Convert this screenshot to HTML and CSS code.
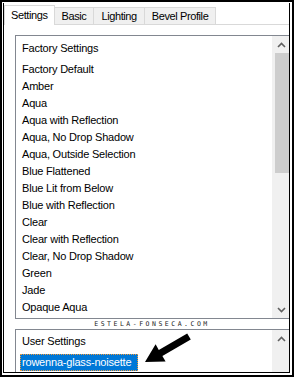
FILE: index.html
```html
<!DOCTYPE html>
<html>
<head>
<meta charset="utf-8">
<link rel="stylesheet" href="styles.css">
</head>
<body>
<div class="frame">
  <div class="dialog">
    <div class="tabs">
      <div class="tab active">Settings</div>
      <div class="tab">Basic</div>
      <div class="tab">Lighting</div>
      <div class="tab">Bevel Profile</div>
    </div>
    <div class="panel">
      <div class="listbox lb1">
        <div class="list">
          <div class="head">Factory Settings</div>
          <div class="item">Factory Default</div>
          <div class="item">Amber</div>
          <div class="item">Aqua</div>
          <div class="item">Aqua with Reflection</div>
          <div class="item">Aqua, No Drop Shadow</div>
          <div class="item">Aqua, Outside Selection</div>
          <div class="item">Blue Flattened</div>
          <div class="item">Blue Lit from Below</div>
          <div class="item">Blue with Reflection</div>
          <div class="item">Clear</div>
          <div class="item">Clear with Reflection</div>
          <div class="item">Clear, No Drop Shadow</div>
          <div class="item">Green</div>
          <div class="item">Jade</div>
          <div class="item">Opaque Aqua</div>
        </div>
        <div class="scrollbar">
          <div class="sbtn"><svg width="9" height="6" viewBox="0 0 9 6"><polyline points="1,5 4.5,1.5 8,5" fill="none" stroke="#606060" stroke-width="1.6"/></svg></div>
          <div class="track"><div class="thumb"></div></div>
          <div class="sbtn"><svg width="9" height="6" viewBox="0 0 9 6"><polyline points="1,1 4.5,4.5 8,1" fill="none" stroke="#606060" stroke-width="1.6"/></svg></div>
        </div>
      </div>
      <div class="watermark">ESTELA-FONSECA.COM</div>
      <div class="listbox lb2">
        <div class="list">
          <div class="head">User Settings</div>
          <div class="item"><span class="selected">rowenna-glass-noisette</span></div>
        </div>
        <div class="scrollbar">
          <div class="sbtn"><svg width="9" height="6" viewBox="0 0 9 6"><polyline points="1,5 4.5,1.5 8,5" fill="none" stroke="#606060" stroke-width="1.6"/></svg></div>
          <div class="track"></div>
        </div>
      </div>
    </div>
  </div>
  <svg class="pointer" width="294" height="377" viewBox="0 0 294 377">
    <polygon points="145,362 165.6,361.5 162.4,355.9 190.8,339.5 187.2,333.5 158.8,349.9 155.6,344.3" fill="#000"/>
  </svg>
</div>
</body>
</html>
```

FILE: styles.css
```css
* { box-sizing: border-box; }
html, body { margin: 0; padding: 0; background: #fff; }
body {
  font-family: "Liberation Sans", Arial, sans-serif;
  font-size: 11px;
  letter-spacing: -0.2px;
  color: #000;
}
.frame {
  position: relative;
  width: 294px;
  height: 377px;
  border: 2px solid #000;
  padding: 1px 2px 2px 1px;
  background: #fff;
  overflow: hidden;
}
.dialog {
  height: 100%;
  border: 1px solid #000;
  border-top: none;
  display: flex;
  flex-direction: column;
}
.tabs {
  display: flex;
  align-items: flex-end;
  height: 22px;
  padding-top: 2px;
  border-bottom: 1px solid #d9d9d9;
}
.tab {
  height: 17px;
  display: flex;
  align-items: center;
  padding: 0 7px;
  background: #f0f0f0;
  border: 1px solid #d9d9d9;
  border-left: none;
  border-bottom: none;
  white-space: nowrap;
  letter-spacing: -0.4px;
}
.tab.active {
  height: 20px;
  margin-bottom: -1px;
  padding: 0 6px 2px 6px;
  background: #fff;
  border-left: 1px solid #d9d9d9;
}
.panel {
  flex: 1;
  display: flex;
  flex-direction: column;
  min-height: 0;
}
.listbox {
  margin-left: 11px;
  border: 1px solid #828790;
  border-right: none;
  display: flex;
}
.lb1 {
  margin-top: 10px;
  height: 284px;
}
.lb2 {
  flex: 1;
  border-bottom: none;
  min-height: 0;
}
.list {
  flex: 1;
  padding: 4px 0 0 4px;
  overflow: hidden;
}
.lb2 .list { padding-top: 3px; }
.head, .item {
  height: 17px;
  line-height: 17px;
  padding-left: 2px;
  white-space: nowrap;
}
.head { margin-bottom: 4px; }
.lb2 .item { padding-left: 0; }
.selected {
  display: inline-block;
  height: 17px;
  line-height: 15px;
  padding: 0 6px 0 1px;
  background: #0078d7;
  color: #fff;
  border: 1px dotted #f39a3a;
}
.scrollbar {
  width: 17px;
  display: flex;
  flex-direction: column;
  background: #f0f0f0;
}
.sbtn {
  height: 17px;
  display: flex;
  align-items: center;
  justify-content: center;
  padding-left: 2px;
}
.track {
  flex: 1;
  display: flex;
  flex-direction: column;
}
.thumb {
  height: 120px;
  margin: 0 0 0 3px;
  background: #cdcdcd;
}
.watermark {
  height: 10px;
  margin-left: 11px;
  text-align: center;
  font-family: "DejaVu Sans Mono", monospace;
  font-size: 6.5px;
  letter-spacing: 2.5px;
  line-height: 10px;
  color: #222;
}
.pointer {
  position: absolute;
  left: -2px;
  top: -2px;
}
```
